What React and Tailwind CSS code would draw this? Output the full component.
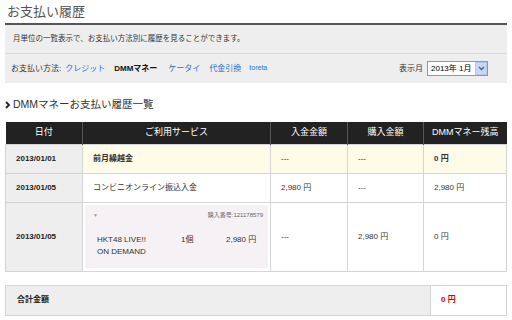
import React from 'react';

const font = { fontFamily: '"Liberation Sans", "Noto Sans CJK JP", sans-serif' };

function Select() {
  return (
    <div className="flex items-center h-[15px] w-[61px] border border-[#7f9db9] bg-white">
      <span className="flex-1 pl-[3px] text-[8px] text-black leading-none">2013年 1月</span>
      <span className="flex items-center justify-center w-[12px] h-[13px] bg-[#c8d7f5] border border-[#b4c8f0]">
        <svg width="7" height="5" viewBox="0 0 7 5">
          <path d="M1 1 L3.5 3.5 L6 1" stroke="#4d6185" strokeWidth="1.4" fill="none" />
        </svg>
      </span>
    </div>
  );
}

export default function App() {
  const th = 'bg-[#222] text-white font-normal text-[9px] h-[22px] border-l border-[#555] first:border-l-0';
  const td = 'border border-[#d4d4d4] text-[8px] text-[#333] px-[10px]';
  const date = 'border border-[#d4d4d4] bg-[#eee] text-[8px] font-bold text-[#222] pl-[10px]';

  return (
    <div className="w-[512px] h-[320px] bg-white overflow-hidden" style={font}>
      <h1 className="text-[13px] text-[#555] leading-none pt-[5px] pl-[7px] h-[23px]">お支払い履歴</h1>

      <div className="mx-[5px] border-t-2 border-[#555] bg-[#eee]">
        <div className="h-[29px] flex items-center pl-[8px] text-[7.5px] text-[#333] border-b border-[#d8d8d8]">
          月単位の一覧表示で、お支払い方法別に履歴を見ることができます。
        </div>
        <div className="h-[29px] flex items-center pl-[6px] pr-[19px] text-[8px]">
          <span className="text-[#333]">お支払い方法:</span>
          <span className="ml-[4px] text-[#2a6fcb]">クレジット</span>
          <span className="ml-[9px] font-bold text-[#111]">DMMマネー</span>
          <span className="ml-[11px] text-[#2a6fcb]">ケータイ</span>
          <span className="ml-[9px] text-[#2a6fcb]">代金引換</span>
          <span className="ml-[8px] text-[#2a6fcb] text-[7px]">toreta</span>
          <span className="ml-auto mr-[4px] text-[#333]">表示月</span>
          <Select />
        </div>
      </div>

      <h2 className="mt-[14px] pl-[5px] flex items-center text-[10.5px] text-[#333] h-[15px]">
        <svg width="6" height="8" viewBox="0 0 6 8" className="mr-[2px]">
          <path d="M1 1 L4 4 L1 7" stroke="#222" strokeWidth="1.8" fill="none" />
        </svg>
        DMMマネーお支払い履歴一覧
      </h2>

      <table className="mt-[10px] ml-[5px] w-[501px] border-collapse table-fixed">
        <colgroup>
          <col className="w-[77px]" />
          <col className="w-[188px]" />
          <col className="w-[77px]" />
          <col className="w-[76px]" />
          <col className="w-[83px]" />
        </colgroup>
        <thead>
          <tr>
            <th className={th}>日付</th>
            <th className={th}>ご利用サービス</th>
            <th className={th}>入金金額</th>
            <th className={th}>購入金額</th>
            <th className={th}>DMMマネー残高</th>
          </tr>
        </thead>
        <tbody>
          <tr className="h-[29px]">
            <td className={date}>2013/01/01</td>
            <td className={`${td} bg-[#fffbe9] font-bold text-[#222]`}>前月繰越金</td>
            <td className={`${td} bg-[#fffbe9]`}>---</td>
            <td className={`${td} bg-[#fffbe9]`}>---</td>
            <td className={`${td} bg-[#fffbe9] font-bold text-[#222]`}>0 円</td>
          </tr>
          <tr className="h-[29px]">
            <td className={date}>2013/01/05</td>
            <td className={td}>コンビニオンライン振込入金</td>
            <td className={td}>2,980 円</td>
            <td className={td}>---</td>
            <td className={td}>2,980 円</td>
          </tr>
          <tr className="h-[69px]">
            <td className={date}>2013/01/05</td>
            <td className="border border-[#d4d4d4] p-[2px]">
              <div className="bg-[#f6f1f4] h-[63px] px-[8px] pt-[6px] text-[8px] text-[#333]">
                <div className="flex items-center justify-between">
                  <span className="text-[#999] text-[5px] leading-none">▼</span>
                  <span className="text-[6px] text-[#666] mr-[-3px]">購入番号:121178579</span>
                </div>
                <div className="flex mt-[14px] pl-[4px] leading-[12px]">
                  <div className="w-[84px]">HKT48 LIVE!!<br />ON DEMAND</div>
                  <div className="w-[45px]">1個</div>
                  <div>2,980 円</div>
                </div>
              </div>
            </td>
            <td className={td}>---</td>
            <td className={td}>2,980 円</td>
            <td className={td}>0 円</td>
          </tr>
        </tbody>
      </table>

      <div className="mt-[13px] mx-[5px] h-[31px] flex border border-[#d4d4d4]">
        <div className="flex-1 bg-[#eee] flex items-center pl-[11px] text-[8px] font-bold text-[#222]">合計金額</div>
        <div className="w-[76px] border-l border-[#d4d4d4] bg-white flex items-center pl-[10px] text-[8px] font-bold text-[#d00]">0 円</div>
      </div>
    </div>
  );
}
